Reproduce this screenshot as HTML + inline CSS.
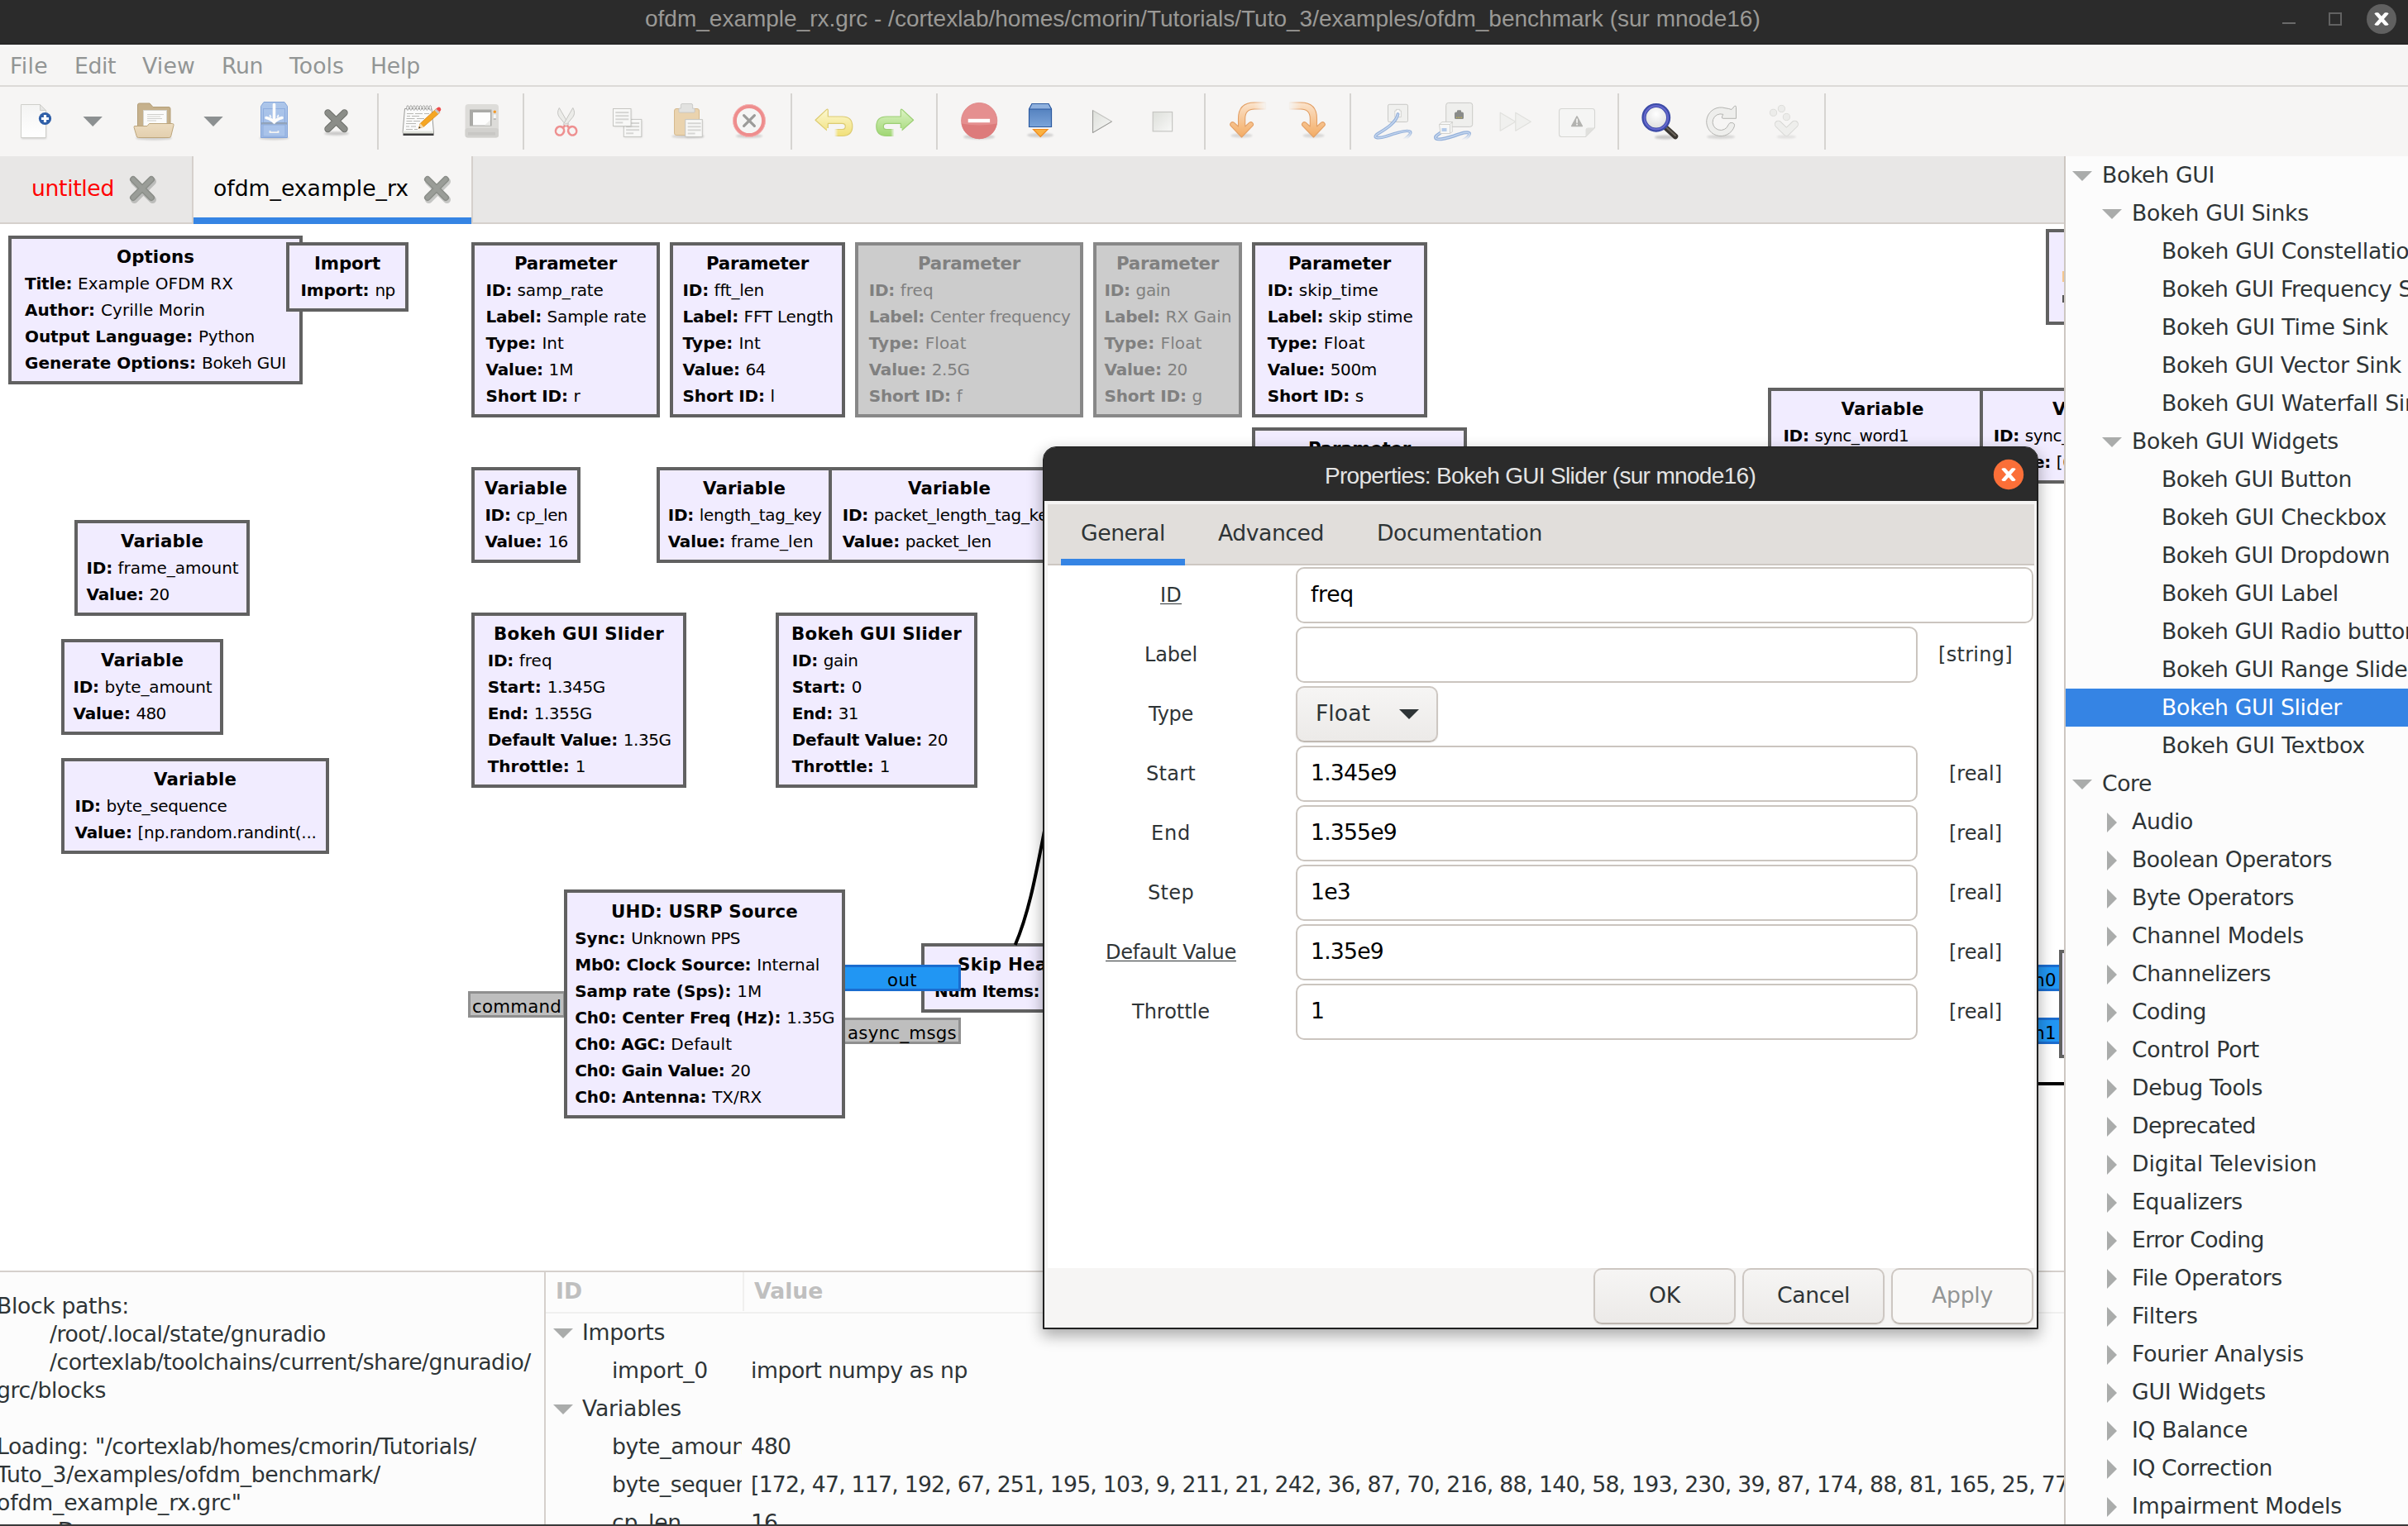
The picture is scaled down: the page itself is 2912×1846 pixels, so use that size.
<!DOCTYPE html>
<html><head><meta charset="utf-8"><title>ofdm_example_rx.grc</title>
<style>
*{box-sizing:border-box}
html,body{margin:0;padding:0}
body{width:2912px;height:1846px;overflow:hidden;position:relative;background:#f6f5f4;font-family:"DejaVu Sans","Liberation Sans",sans-serif;font-size:26.667px;font-kerning:normal;color:#2e3436}
.abs{position:absolute}
#titlebar{left:0;top:0;width:2912px;height:54px;background:#2b2b2b;box-shadow:inset 0 -1px #1c1c1c}
#title{left:780px;top:0;height:54px;line-height:46px;font-family:"Liberation Sans",sans-serif;font-size:28px;color:#9a9996;white-space:nowrap}
#menubar{left:0;top:54px;width:2912px;height:51px;background:#f6f5f4;border-top:2px solid #fdfdfd;border-bottom:2px solid #dcdad7}
.mi{position:absolute;top:-1px;height:49px;line-height:49px;color:#929595;white-space:nowrap}
#toolbar{left:0;top:105px;width:2912px;height:84px;background:#f6f5f4}
.sep{position:absolute;top:8px;width:2px;height:68px;background:#d6d4d1}
#tabbar{left:0;top:189px;width:2496px;height:82px;background:#e8e7e6;border-bottom:2px solid #d5d0cc}
#canvas{left:0;top:271px;width:2496px;height:1267px;background:#fff;overflow:hidden}
.blk{position:absolute;border:4px solid #616161;background:#f1ecff;color:#000;font-size:20px;line-height:32px;white-space:nowrap;padding:6px 0 0 16px;overflow:hidden}
.blk .t{font-weight:bold;font-size:21.333px;text-align:center;margin-left:-16px}
.blk.dis{background:#cccccc;border-color:#888888;color:#808080}
.port{position:absolute;font-size:21.333px;color:#000;white-space:nowrap;text-align:center;line-height:28px}
#right{left:2496px;top:189px;width:416px;height:1657px;background:#fcfcfc;border-left:2px solid #cdc7c2;overflow:hidden}
.tr{position:absolute;left:0;width:420px;height:46px;line-height:46px;white-space:nowrap;color:#2e3436}
.tr.sel{background:#3584e4;color:#fff}
.ad{position:absolute;width:0;height:0;margin-left:-0.5px;border-left:12px solid transparent;border-right:12px solid transparent;border-top:12px solid #aaacab}
.ar{position:absolute;width:0;height:0;margin-left:-1px;border-top:12px solid transparent;border-bottom:12px solid transparent;border-left:12px solid #aaacab}
#console{left:0;top:1539px;width:658px;height:307px;background:#fcfcfc;overflow:hidden;color:#2e3436;line-height:34px;white-space:pre}
#vars{left:660px;top:1539px;width:1836px;height:307px;background:#fcfcfc;overflow:hidden}
.vr{position:absolute;height:46px;line-height:45px;white-space:nowrap;overflow:hidden}
#dlg{left:1261px;top:540px;width:1204px;height:1068px;background:#f6f5f4;border:1px solid #1f1f1f;border-radius:16px 16px 0 0;box-shadow:inset 1px 0 #222,inset -1px 0 #222,inset 0 -1px #222,0 7px 18px 1px rgba(0,0,0,.32);overflow:hidden}
#dtitle{left:0;top:0;width:1201px;height:65px;background:#2b2b2b;color:#e4e4e4;font-family:"Liberation Sans",sans-serif;font-size:28px;line-height:69px;text-align:center;letter-spacing:-0.67px}
.ent{position:absolute;height:68px;border:2px solid #cbc5bf;border-radius:10px;background:#fff;color:#000;line-height:62px;padding-left:16px;font-size:26.667px}
.lab{position:absolute;left:0;width:308px;text-align:center;line-height:69px;height:67px;color:#2e3436;font-size:24px}
.lab u{text-decoration-thickness:1.300px;text-underline-offset:1.500px}
.typ{position:absolute;left:1082px;width:90px;text-align:center;line-height:69px;height:67px;color:#2e3436;white-space:nowrap;font-size:24px}
.btn{position:absolute;top:993px;height:68px;width:172px;border:2px solid #cdc7c2;border-color:#cdc7c2 #cdc7c2 #bfb8b1;box-shadow:0 1px 2px rgba(0,0,0,.07);border-radius:10px;background:linear-gradient(#f6f5f4,#eceae8);text-align:center;line-height:61px;color:#2e3436}
</style></head>
<body>

<div id="titlebar" class="abs"></div>
<div id="title" class="abs">ofdm_example_rx.grc - /cortexlab/homes/cmorin/Tutorials/Tuto_3/examples/ofdm_benchmark (sur mnode16)</div>
<svg class="abs" style="left:2740px;top:0" width="172" height="54" viewBox="2740 0 172 54">
<rect x="2760" y="27" width="16" height="2" fill="#6a6a6a"/>
<rect x="2817" y="16" width="14" height="14" fill="none" stroke="#626262" stroke-width="2"/>
<circle cx="2880" cy="23" r="18" fill="#606060"/>
<clipPath id="cx1"><rect x="2868" y="15.200" width="24" height="15.600"/></clipPath><path d="M2873 15 L2887 31 M2887 15 L2873 31" stroke="#fff" stroke-width="4.400" clip-path="url(#cx1)"/>
</svg>
<div id="menubar" class="abs">
<div class="mi" style="left:12px"><span style="letter-spacing:0.344px">File</span></div>
<div class="mi" style="left:90px"><span style="letter-spacing:-0.410px">Edit</span></div>
<div class="mi" style="left:172px"><span style="letter-spacing:0.179px">View</span></div>
<div class="mi" style="left:268px"><span style="letter-spacing:-0.378px">Run</span></div>
<div class="mi" style="left:350px"><span style="letter-spacing:0.062px">Tools</span></div>
<div class="mi" style="left:448px"><span style="letter-spacing:-0.199px">Help</span></div>
</div>
<div id="toolbar" class="abs">
<div class="sep" style="left:456px"></div>
<div class="sep" style="left:632px"></div>
<div class="sep" style="left:956px"></div>
<div class="sep" style="left:1132px"></div>
<div class="sep" style="left:1456px"></div>
<div class="sep" style="left:1632px"></div>
<div class="sep" style="left:1956px"></div>
<div class="sep" style="left:2206px"></div>
<svg class="abs" style="left:0;top:0" width="2912" height="84" viewBox="0 105 2912 84">
<defs>
<linearGradient id="gpaper" x1="0" y1="0" x2="0" y2="1"><stop offset="0" stop-color="#f4f4f3"/><stop offset="1" stop-color="#ffffff"/></linearGradient>
<linearGradient id="gfold" x1="0" y1="0" x2="0" y2="1"><stop offset="0" stop-color="#ecdcc0"/><stop offset="1" stop-color="#e3cfae"/></linearGradient>
<linearGradient id="gcab" x1="0" y1="0" x2="0" y2="1"><stop offset="0" stop-color="#adc6ea"/><stop offset="1" stop-color="#9fbbe6"/></linearGradient>
<linearGradient id="gbox" x1="0" y1="0" x2="0" y2="1"><stop offset="0" stop-color="#4a78b8"/><stop offset="1" stop-color="#7ba4d9"/></linearGradient>
<linearGradient id="gor" x1="0" y1="0" x2="0" y2="1"><stop offset="0" stop-color="#fbe3cb"/><stop offset="1" stop-color="#f3ab62"/></linearGradient>
<linearGradient id="gorl" x1="0" y1="0" x2="1" y2="0"><stop offset="0" stop-color="#f6c99a"/><stop offset="1" stop-color="#f6c99a" stop-opacity="0"/></linearGradient>
<linearGradient id="gorr" x1="1" y1="0" x2="0" y2="0"><stop offset="0" stop-color="#f6c99a"/><stop offset="1" stop-color="#f6c99a" stop-opacity="0"/></linearGradient>
<linearGradient id="gyel" x1="0" y1="0" x2="0" y2="1"><stop offset="0" stop-color="#fcf8d2"/><stop offset="1" stop-color="#f1e078"/></linearGradient>
<linearGradient id="ggrn" x1="0" y1="0" x2="0" y2="1"><stop offset="0" stop-color="#dcf3c4"/><stop offset="1" stop-color="#9fd672"/></linearGradient>
<linearGradient id="ggray" x1="0" y1="0" x2="1" y2="1"><stop offset="0" stop-color="#dddfda"/><stop offset="1" stop-color="#f8f8f7"/></linearGradient>
<linearGradient id="gfade" x1="0" y1="0" x2="0" y2="1"><stop offset="0" stop-color="#f6f5f4" stop-opacity="0"/><stop offset=".7" stop-color="#f6f5f4" stop-opacity="1"/></linearGradient>
<radialGradient id="glens" cx=".5" cy=".35" r=".6"><stop offset="0" stop-color="#ffffff"/><stop offset="1" stop-color="#dedede"/></radialGradient>
<filter id="sh" x="-20%" y="-20%" width="140%" height="160%"><feGaussianBlur stdDeviation="1.2"/></filter>
</defs>
<path d="M26 128 H48.500 L56 135 V168 H26 Z" fill="#000" opacity=".16" filter="url(#sh)"/>
<path d="M25.5 126.5 H48.5 L55.5 133.5 V166.5 H25.5 Z" fill="url(#gpaper)" stroke="#cfcfcb" stroke-width="1"/>
<path d="M48.5 126.5 V133.5 H55.5 Z" fill="#e6e6e4" stroke="#cfcfcb" stroke-width="1"/>
<circle cx="54.5" cy="143.5" r="7.6" fill="#2f5fa8"/><path d="M50 143.5 H59 M54.5 139 V148" stroke="#fff" stroke-width="3.2"/>
<path d="M100.5 141 h23.4 l-11.7 12 z" fill="#8c9091"/>
<path d="M246.3 141 h23.4 l-11.7 12 z" fill="#8c9091"/>
<ellipse cx="186" cy="167" rx="22" ry="2.5" fill="#000" opacity=".15" filter="url(#sh)"/>
<path d="M166.5 127 q0 -2 2 -2 h12.5 l4 4.5 h19 q2 0 2 2 v30 h-39.5 z" fill="#c6b18c" stroke="#b39e78" stroke-width="1"/>
<rect x="173.5" y="133.5" width="28" height="22" fill="#fbfbfa" stroke="#d6d6d2" stroke-width="1"/>
<path d="M178 138.5 h20 M178 141 h16 M178 143.5 h18 M178 146 h11" stroke="#cfcfcc" stroke-width="1"/>
<path d="M162.5 152.5 h15.5 l2.5 -3 h28 q1.8 0 1.5 2 l-3.2 13 q-.4 2 -2.3 2 h-37 q-2 0 -2.4 -2 l-2.9 -10 q-.4 -2 0.3 -2 z" fill="url(#gfold)" stroke="#bda67d" stroke-width="1"/>
<ellipse cx="331.5" cy="167" rx="18" ry="2.2" fill="#000" opacity=".15" filter="url(#sh)"/>
<path d="M315.5 128.5 l3.5 -5 h25 l3.5 5 v38 h-32 z" fill="url(#gcab)" stroke="#84a4d8" stroke-width="1"/>
<rect x="318.5" y="131.5" width="26" height="17" fill="none" stroke="#8fadde" stroke-width="1"/>
<rect x="316" y="148" width="31" height="2.6" fill="#8d9aa8" opacity=".7"/>
<rect x="318" y="151" width="27" height="14" fill="#a9c3ea" stroke="#8fadde" stroke-width="1"/>
<path d="M326.5 158 v2.2 h10 v-2.2" fill="none" stroke="#f2f2f2" stroke-width="1.8"/>
<path d="M331.5 126.5 V147" stroke="#fcfcfc" stroke-width="3.600" stroke-linecap="round"/><path d="M322 142.500 q6.500 1.500 9.500 5.500 q3 -4 9.500 -5.500" fill="none" stroke="#fcfcfc" stroke-width="3.600" stroke-linecap="round" stroke-linejoin="round"/>
<path d="M327 139 q-1.5 2 1.2 2.6 M336 139 q1.5 2 -1.2 2.6" stroke="#fcfcfc" stroke-width="1.6" fill="none"/>
<ellipse cx="407" cy="161.5" rx="15" ry="2.2" fill="#000" opacity=".18" filter="url(#sh)"/>
<path d="M396.5 136.5 L416.5 156 M416.5 136.5 L396.5 156" stroke="#6e706b" stroke-width="8.4" stroke-linecap="round"/>
<path d="M396.5 136.5 L416.5 156 M416.5 136.5 L396.5 156" stroke="#8b8d88" stroke-width="6.4" stroke-linecap="round"/>
<rect x="487.5" y="160" width="37" height="4" fill="#3c3c3c"/>
<path d="M489.5 131.5 h32.5 l2.5 29 h-37.5 z" fill="#fafafa" stroke="#9b9b98" stroke-width="1"/>
<rect x="487.5" y="158.5" width="36.5" height="3" fill="#e4e6df"/>
<path d="M492 137.5 h8 M502 137.5 h9 M513 137.5 h6 M492 140.5 h4 M498 140.5 h9 M491.5 143.5 h10 M504 143.5 h9 M491.5 146.5 h7 M500 146.5 h8 M491 149.5 h12 M491 153 h4 M497 153 h6 M491 156.5 h8 M501 156.5 h4" stroke="#b8b8b4" stroke-width="1.1"/>
<ellipse cx="493.0" cy="130.5" rx="1.3" ry="2.8" fill="#fff" stroke="#8a8a88" stroke-width=".8"/>
<ellipse cx="496.9" cy="130.5" rx="1.3" ry="2.8" fill="#fff" stroke="#8a8a88" stroke-width=".8"/>
<ellipse cx="500.8" cy="130.5" rx="1.3" ry="2.8" fill="#fff" stroke="#8a8a88" stroke-width=".8"/>
<ellipse cx="504.7" cy="130.5" rx="1.3" ry="2.8" fill="#fff" stroke="#8a8a88" stroke-width=".8"/>
<ellipse cx="508.6" cy="130.5" rx="1.3" ry="2.8" fill="#fff" stroke="#8a8a88" stroke-width=".8"/>
<ellipse cx="512.5" cy="130.5" rx="1.3" ry="2.8" fill="#fff" stroke="#8a8a88" stroke-width=".8"/>
<ellipse cx="516.4" cy="130.5" rx="1.3" ry="2.8" fill="#fff" stroke="#8a8a88" stroke-width=".8"/>
<ellipse cx="520.3" cy="130.5" rx="1.3" ry="2.8" fill="#fff" stroke="#8a8a88" stroke-width=".8"/>
<path d="M506.3 155.3 l2 -6 l19 -17.5 l4.5 4.5 l-19.5 17 z" fill="#f5a623" stroke="#d8861a" stroke-width=".8"/>
<path d="M527.3 131.8 l2 -1.8 q2 -1 3.3 0.6 q1.4 1.6 .2 3.4 l-1.2 1.2 z" fill="#ee4b4b"/>
<path d="M525.5 133.6 l1.8 -1.8 l4.5 4.5 l-1.8 1.6 z" fill="#c9c9c9"/>
<path d="M506.3 155.3 l2 -6 l4 4.5 z" fill="#f3dcb4"/><path d="M506.3 155.3 l.8 -2.4 l1.6 1.7 z" fill="#222"/>
<rect x="562.5" y="126" width="40.5" height="40.5" rx="4" fill="#dddcd9"/>
<rect x="562.5" y="155" width="40.5" height="11.5" rx="3" fill="#d2d1ce"/><rect x="566" y="160" width="33" height="3.5" fill="#c8c7c4"/>
<rect x="568" y="132.5" width="26.5" height="20" fill="#a9a9a6"/><rect x="572" y="136" width="21" height="15.5" fill="#fdfdfd"/>
<path d="M593 145 v6.5 h-7 z" fill="#ececea"/>
<circle cx="598.3" cy="135.3" r="1.7" fill="#f39a2b"/><rect x="596.8" y="138.5" width="3" height="4.5" fill="#f6f6f5"/><rect x="596.8" y="143.6" width="3" height=".9" fill="#9a9a98"/>
<path d="M676.3 130.5 q-3.5 6 0 11 l9.5 11.5 l2 -2.5 z" fill="#ecece9" stroke="#b9b9b5" stroke-width=".8"/>
<path d="M692.8 130.5 q3.5 6 0 11 l-9.5 11.5 l-2 -2.5 z" fill="#ecece9" stroke="#b9b9b5" stroke-width=".8"/>
<ellipse cx="677" cy="158.3" rx="5" ry="5.3" fill="none" stroke="#ee9090" stroke-width="2.6" transform="rotate(25 677 158.3)"/>
<ellipse cx="692.2" cy="158.3" rx="5" ry="5.3" fill="none" stroke="#ee9090" stroke-width="2.6" transform="rotate(-25 692.2 158.3)"/>
<path d="M680.5 154.5 L684.5 151 L688.5 154.5" fill="none" stroke="#ee9090" stroke-width="2.8"/>
<circle cx="684.5" cy="150.7" r="1.3" fill="#f6f6f5" stroke="#c0c0bd" stroke-width=".6"/>
<rect x="755.0" y="145.4" width="21.5" height="21" fill="#000" opacity=".12" filter="url(#sh)"/>
<rect x="754.3" y="144.4" width="21.5" height="21" fill="#f8f8f7" stroke="#c6c6c2" stroke-width="1"/>
<rect x="757.0999999999999" y="148.0" width="16" height="2" fill="#d6d6d4"/>
<rect x="757.0999999999999" y="152.1" width="16" height="2" fill="#d6d6d4"/>
<rect x="757.0999999999999" y="156.2" width="16" height="2" fill="#d6d6d4"/>
<rect x="757.0999999999999" y="160.3" width="9" height="2" fill="#d6d6d4"/>
<rect x="742.2" y="132.5" width="21.5" height="21" fill="#000" opacity=".12" filter="url(#sh)"/>
<rect x="741.5" y="131.5" width="21.5" height="21" fill="#f8f8f7" stroke="#c6c6c2" stroke-width="1"/>
<rect x="744.3" y="135.1" width="16" height="2" fill="#d6d6d4"/>
<rect x="744.3" y="139.2" width="16" height="2" fill="#d6d6d4"/>
<rect x="744.3" y="143.29999999999998" width="16" height="2" fill="#d6d6d4"/>
<rect x="744.3" y="147.4" width="9" height="2" fill="#d6d6d4"/>
<ellipse cx="832" cy="165" rx="20" ry="2.2" fill="#000" opacity=".15" filter="url(#sh)"/>
<rect x="815.5" y="131.5" width="30" height="32" rx="2.5" fill="#ead3ae" stroke="#d6ba8f" stroke-width="1"/>
<path d="M825 125.5 h11 q1.6 0 1.6 1.6 v4 h1.5 q1 0 1 1 v3 q0 1 -1 1 h-17.2 q-1 0 -1 -1 v-3 q0 -1 1 -1 h1.5 v-4 q0 -1.6 1.6 -1.6 z" fill="#e2e2e0" stroke="#c4c4c1" stroke-width=".8"/>
<rect x="829.5" y="145.6" width="20.5" height="20.8" fill="#000" opacity=".12" filter="url(#sh)"/>
<rect x="828.8" y="144.6" width="20.5" height="20.8" fill="#f8f8f7" stroke="#c6c6c2" stroke-width="1"/>
<rect x="831.5999999999999" y="148.2" width="16" height="2" fill="#d6d6d4"/>
<rect x="831.5999999999999" y="152.29999999999998" width="16" height="2" fill="#d6d6d4"/>
<rect x="831.5999999999999" y="156.39999999999998" width="16" height="2" fill="#d6d6d4"/>
<rect x="831.5999999999999" y="160.5" width="9" height="2" fill="#d6d6d4"/>
<ellipse cx="906" cy="164.5" rx="16" ry="2.5" fill="#000" opacity=".15" filter="url(#sh)"/>
<circle cx="906" cy="146" r="17.4" fill="#f5f5f4" stroke="#ee8d8d" stroke-width="4.6"/>
<circle cx="906" cy="146" r="19.5" fill="none" stroke="#f5b5b5" stroke-width=".9"/>
<path d="M899.600 139.600 L912.400 152.400 M912.400 139.600 L899.600 152.400" stroke="#9b9b99" stroke-width="3.200" stroke-linecap="round"/>
<defs><linearGradient id="fy" x1="0" x2="1"><stop offset="0" stop-color="#fff" stop-opacity="0"/><stop offset=".45" stop-color="#fff"/></linearGradient><mask id="my"><rect x="980" y="120" width="60" height="60" fill="#fff"/><rect x="1000" y="155" width="14" height="14" fill="#000"/><rect x="1009" y="155" width="10" height="14" fill="url(#fy)"/></mask>
<linearGradient id="fg" x1="1" x2="0"><stop offset="0" stop-color="#fff" stop-opacity="0"/><stop offset=".45" stop-color="#fff"/></linearGradient><mask id="mg"><rect x="1050" y="120" width="60" height="60" fill="#fff"/><rect x="1076" y="155" width="14" height="14" fill="#000"/><rect x="1071" y="155" width="10" height="14" fill="url(#fg)"/></mask></defs>
<g mask="url(#my)"><path d="M986 145.3 L999.5 132.6 q1.8 -1.4 1.8 1 V141 h17 q12.5 0 12.5 11.8 q0 11.7 -12.5 11.7 h-9 v-8 h9 q4 0 4 -3.6 q0 -3.5 -4 -3.5 h-17 v7 q0 2.4 -1.8 1 z" fill="url(#gyel)" stroke="#dccb72" stroke-width="1.2" stroke-linejoin="round"/></g>
<g transform="translate(2090.6,0) scale(-1,1)"><g mask="url(#my)"><path d="M986 145.3 L999.5 132.6 q1.8 -1.4 1.8 1 V141 h17 q12.5 0 12.5 11.8 q0 11.7 -12.5 11.7 h-9 v-8 h9 q4 0 4 -3.6 q0 -3.5 -4 -3.5 h-17 v7 q0 2.4 -1.8 1 z" fill="url(#ggrn)" stroke="#9ccf74" stroke-width="1.2" stroke-linejoin="round"/></g></g>
<ellipse cx="1184" cy="165.5" rx="19" ry="3" fill="#000" opacity=".15" filter="url(#sh)"/>
<circle cx="1184.2" cy="146" r="21.6" fill="#e58f8f" stroke="#dd8080" stroke-width=".8"/>
<path d="M1162.8 149.5 q21 4 42.8 0 a21.6 21.6 0 0 1 -42.8 0 z" fill="#dd7b7b"/>
<rect x="1170.7" y="143.8" width="26.4" height="4.4" fill="#fff"/>
<ellipse cx="1258" cy="163.5" rx="16" ry="2.8" fill="#000" opacity=".15" filter="url(#sh)"/>
<path d="M1244.5 132 l3.5 -6.5 h20 l3.5 6.5 v21.5 h-27 z" fill="url(#gbox)" stroke="#2c5aa0" stroke-width="1.2"/>
<path d="M1244.5 132 l3.5 -6.5 h20 l3.5 6.5 z" fill="#8fb1de" stroke="#2c5aa0" stroke-width="1"/>
<path d="M1249.5 156.5 h17.5 l-8.8 9 z" fill="#fbb13f" stroke="#f08a1c" stroke-width="1.2"/>
<path d="M1321.5 133.5 V160.5 L1344.5 147 Z" fill="url(#ggray)" stroke="#c4c4c1" stroke-width="1.2" stroke-linejoin="round"/>
<path d="M1321.5 133.5 V160.5 L1344.5 147" fill="none" stroke="#6f6f6d" stroke-width=".9" opacity=".55"/>
<rect x="1394.2" y="135.5" width="23.4" height="23.3" fill="url(#ggray)" stroke="#c6c6c3" stroke-width="1.2"/>
<defs><linearGradient id="fo" x1="0" x2="1"><stop offset="0" stop-color="#fff"/><stop offset="1" stop-color="#fff" stop-opacity="0"/></linearGradient><mask id="mo"><rect x="1480" y="118" width="36" height="56" fill="#fff"/><rect x="1516" y="118" width="16" height="56" fill="url(#fo)"/></mask></defs>
<ellipse cx="1501.5" cy="164" rx="13" ry="2.5" fill="#000" opacity=".12" filter="url(#sh)"/>
<g mask="url(#mo)"><path d="M1531 124 h-14 q-19.5 0 -19.5 19.5 v9.5 l-5 -4.6 q-2.2 -1.6 -4 .2 q-1.8 1.9 0 3.8 l13 13.6 l13.2 -13.6 q1.8 -1.9 0 -3.8 q-1.8 -1.8 -4 -.2 l-5 4.6 v-9.5 q0 -11.500 11.3 -11.500 h14 z" fill="url(#gor)" stroke="#e3a066" stroke-width="1.1" stroke-linejoin="round"/></g>
<ellipse cx="1588.5" cy="164" rx="13" ry="2.5" fill="#000" opacity=".12" filter="url(#sh)"/>
<g transform="translate(3090,0) scale(-1,1)"><g mask="url(#mo)"><path d="M1531 124 h-14 q-19.5 0 -19.5 19.5 v9.5 l-5 -4.6 q-2.2 -1.6 -4 .2 q-1.8 1.9 0 3.8 l13 13.6 l13.2 -13.6 q1.8 -1.9 0 -3.8 q-1.8 -1.8 -4 -.2 l-5 4.6 v-9.5 q0 -11.500 11.3 -11.500 h14 z" fill="url(#gor)" stroke="#e3a066" stroke-width="1.1" stroke-linejoin="round"/></g></g>
<rect x="1678.5" y="126.3" width="24" height="21.2" rx="1.8" fill="#f0f0ee" stroke="#c9c9c6" stroke-width="1"/>
<path d="M1686.8 134 h1.6 v-1.6 h4.400 v1.6 h1.6 v7.6 h-7.600 z" fill="#f8f8f7" stroke="#cfcfcc" stroke-width=".9"/>
<path d="M1690.5 138 C1688 150 1672 158 1664.500 163 C1660 167.500 1668 167.500 1676 165 C1690 160 1703 156.500 1705.500 159.500 C1707 162 1702 166 1698 169" fill="none" stroke="#95b1da" stroke-width="3.8" stroke-linecap="round"/>
<path d="M1690.5 138 C1688 150 1672 158 1664.500 163 C1660 167.500 1668 167.500 1676 165 C1690 160 1703 156.500 1705.500 159.500 C1707 162 1702 166 1698 169" fill="none" stroke="#c3d5ee" stroke-width="1.5" stroke-linecap="round"/>
<path d="M1700 160 L1712 160 L1704 172 L1690 172 Z" fill="url(#gfade)"/>
<rect x="1748.7" y="124.4" width="32" height="29" rx="3" fill="#efefed" stroke="#c9c9c6" stroke-width="1"/>
<path d="M1759 137.500 q0 -2 2 -2 h1 v-1.3 q0 -1 1 -1 h3 q1 0 1 1 v1.3 h1 q2 0 2 2 v5 q0 1.500 -1.500 1.500 h-8 q-1.500 0 -1.500 -1.500 z" fill="#8a8c8a"/>
<path d="M1761.5 141.500 v1.600 M1763.500 141.500 v1.600 M1765.500 141.500 v1.600 M1767.500 141.500 v1.600" stroke="#c9b94a" stroke-width=".9"/>
<path d="M1746 157 C1742 162 1734 164 1736.500 167.500 C1739 170 1750 167 1758 164.500 C1768 161 1776 158.500 1777 161.500 C1777.500 164 1773 167.500 1769 170" fill="none" stroke="#95b1da" stroke-width="4" stroke-linecap="round"/>
<path d="M1746 157 C1742 162 1734 164 1736.500 167.500 C1739 170 1750 167 1758 164.500 C1768 161 1776 158.500 1777 161.500 C1777.500 164 1773 167.500 1769 170" fill="none" stroke="#c3d5ee" stroke-width="1.6" stroke-linecap="round"/>
<path d="M1771 161 L1783 161 L1775 173 L1761 173 Z" fill="url(#gfade)"/>
<path d="M1740.500 150.500 l3.500 -3 h12.500 l-.5 3 l.3 9 l-2.800 2 h-11.5 z" fill="#f7f7f6" stroke="#cdcdca" stroke-width=".9" stroke-linejoin="round"/>
<path d="M1740.500 150.500 h13 l3 -3" fill="none" stroke="#cdcdca" stroke-width=".9"/><path d="M1753.5 150.500 v10.500" stroke="#cdcdca" stroke-width=".9"/>
<rect x="1743.500" y="155" width="6" height="4" fill="#b4cbea"/>
<path d="M1814.2 136.2 V158.2 L1832.7 147.200 Z" fill="#f0f0ee" stroke="#e0e0dd" stroke-width="1.2" stroke-linejoin="round"/>
<path d="M1832.8 136.2 V158.2 L1851.3 147.200 Z" fill="#f0f0ee" stroke="#e0e0dd" stroke-width="1.2" stroke-linejoin="round"/>
<path d="M1888.5 131.500 h37 q3 0 3 3 v20 l-11 11 h-29 q-3 0 -3 -3 v-28 q0 -3 3 -3 z" fill="#f5f5f4" stroke="#d6d6d3" stroke-width="1.1"/>
<path d="M1928.500 154.500 h-8 q-3 0 -3 3 v8 z" fill="#e0e0dd"/>
<path d="M1907 140.800 l6.400 11.800 h-12.800 z" fill="#b3b3b0" stroke="#b3b3b0" stroke-width="1.4" stroke-linejoin="round"/>
<rect x="1906.2" y="143.500" width="1.700" height="5.200" fill="#f5f5f4"/><rect x="1906.2" y="149.800" width="1.700" height="1.700" fill="#f5f5f4"/>
<ellipse cx="2014" cy="166" rx="13" ry="2.500" fill="#000" opacity=".18" filter="url(#sh)"/>
<path d="M2014.500 154.500 L2026 165" stroke="#3a3630" stroke-width="6.5" stroke-linecap="round"/>
<path d="M2015 154 L2026 164" stroke="#6b655c" stroke-width="2" stroke-linecap="round"/>
<circle cx="2002.800" cy="142.300" r="14.800" fill="url(#glens)" stroke="#3b4aa6" stroke-width="5.2"/>
<circle cx="2002.800" cy="142.300" r="14.200" fill="none" stroke="#6f6fd6" stroke-width="2.200" opacity=".8"/>
<ellipse cx="2081" cy="165.500" rx="17" ry="2.500" fill="#000" opacity=".12" filter="url(#sh)"/>
<path d="M2086 130.700 A17.300 17.300 0 1 0 2097.400 152.800 q.8 -3.400 -2.600 -4.300 q-3.400 -.8 -4.600 2.300 A9.800 9.800 0 1 1 2083.800 138.300 L2082.500 141 q-1 2.300 1.500 2.300 H2099.500 V129.600 q0 -2.200 -2 -1.200 L2094 132.500 Q2090.500 131.300 2086 130.700 z" fill="#eeeeec" stroke="#b4b4b1" stroke-width="1"/>
<circle cx="2144.5" cy="136.3" r="4.100" fill="#ececea" stroke="#d9d9d6" stroke-width=".9"/>
<circle cx="2154.4" cy="131.5" r="4.100" fill="#ececea" stroke="#d9d9d6" stroke-width=".9"/>
<circle cx="2160.4" cy="141.5" r="4.100" fill="#ececea" stroke="#d9d9d6" stroke-width=".9"/>
<ellipse cx="2160.400" cy="165.500" rx="12" ry="2" fill="#000" opacity=".08" filter="url(#sh)"/>
<path d="M2150.500 150.300 L2160.400 160 L2170.300 150.300" fill="none" stroke="#d4d4d1" stroke-width="9.200" stroke-linecap="round" stroke-linejoin="round"/>
<path d="M2150.500 150.300 L2160.400 160 L2170.300 150.300" fill="none" stroke="#eeeeec" stroke-width="7.400" stroke-linecap="round" stroke-linejoin="round"/>
</svg>
</div>
<div id="tabbar" class="abs">
<div class="abs" style="left:232px;top:0;width:340px;height:80px;background:#f6f5f4;border-left:2px solid #d5d0cc;border-right:2px solid #d5d0cc"></div>
<div class="abs" style="left:234px;top:74px;width:336px;height:8px;background:#3584e4"></div>
<div class="abs" style="left:38px;top:1px;line-height:76px;color:#ff0000;font-size:26.667px"><span style="letter-spacing:-0.358px">untitled</span></div>
<div class="abs" style="left:258px;top:1px;line-height:76px;color:#000;font-size:26.667px"><span style="letter-spacing:-0.006px">ofdm_example_rx</span></div>
<svg class="abs" style="left:152px;top:18px" width="44" height="44" viewBox="0 0 44 44"><path d="M9 10 L31 32 M31 10 L9 32" stroke="#6d706c" stroke-width="9" stroke-linecap="round" opacity=".35" transform="translate(1.5,2.5)"/><path d="M9 10 L31 32 M31 10 L9 32" stroke="#8b8e89" stroke-width="8" stroke-linecap="round"/><path d="M9 10 L31 32 M31 10 L9 32" stroke="#9a9d98" stroke-width="5" stroke-linecap="round"/></svg>
<svg class="abs" style="left:508px;top:18px" width="44" height="44" viewBox="0 0 44 44"><path d="M9 10 L31 32 M31 10 L9 32" stroke="#6d706c" stroke-width="9" stroke-linecap="round" opacity=".35" transform="translate(1.5,2.5)"/><path d="M9 10 L31 32 M31 10 L9 32" stroke="#8b8e89" stroke-width="8" stroke-linecap="round"/><path d="M9 10 L31 32 M31 10 L9 32" stroke="#9a9d98" stroke-width="5" stroke-linecap="round"/></svg>
</div>
<div id="canvas" class="abs">
<div class="blk " style="left:10px;top:14px;width:356px;height:180px;padding-left:16px;"><div class="t" style="margin-left:-16px"><span style="letter-spacing:0.078px">Options</span></div><div><b><span style="letter-spacing:-0.206px">Title: </span></b><span style="letter-spacing:0.068px">Example OFDM RX</span></div><div><b><span style="letter-spacing:-0.010px">Author: </span></b><span style="letter-spacing:0.054px">Cyrille Morin</span></div><div><b><span style="letter-spacing:-0.074px">Output Language: </span></b><span style="letter-spacing:-0.221px">Python</span></div><div><b><span style="letter-spacing:0.011px">Generate Options: </span></b><span style="letter-spacing:-0.244px">Bokeh GUI</span></div></div>
<div class="blk " style="left:346px;top:22px;width:148px;height:84px;padding-left:13.4px;"><div class="t" style="margin-left:-13.4px"><span style="letter-spacing:-0.135px">Import</span></div><div><b><span style="letter-spacing:-0.090px">Import: </span></b><span style="letter-spacing:-0.686px">np</span></div></div>
<div class="blk " style="left:570px;top:22px;width:228px;height:212px;padding-left:13.6px;"><div class="t" style="margin-left:-13.6px"><span style="letter-spacing:-0.251px">Parameter</span></div><div><b><span style="letter-spacing:-0.251px">ID: </span></b><span style="letter-spacing:-0.164px">samp_rate</span></div><div><b><span style="letter-spacing:-0.277px">Label: </span></b><span style="letter-spacing:-0.179px">Sample rate</span></div><div><b><span style="letter-spacing:0.142px">Type: </span></b><span style="letter-spacing:-0.139px">Int</span></div><div><b><span style="letter-spacing:-0.214px">Value: </span></b><span style="letter-spacing:0.010px">1M</span></div><div><b><span style="letter-spacing:-0.177px">Short ID: </span></b><span style="letter-spacing:-0.223px">r</span></div></div>
<div class="blk " style="left:810px;top:22px;width:212px;height:212px;padding-left:11.6px;"><div class="t" style="margin-left:-11.6px"><span style="letter-spacing:-0.251px">Parameter</span></div><div><b><span style="letter-spacing:-0.251px">ID: </span></b><span style="letter-spacing:-0.258px">fft_len</span></div><div><b><span style="letter-spacing:-0.277px">Label: </span></b><span style="letter-spacing:-0.221px">FFT Length</span></div><div><b><span style="letter-spacing:0.142px">Type: </span></b><span style="letter-spacing:-0.139px">Int</span></div><div><b><span style="letter-spacing:-0.214px">Value: </span></b><span style="letter-spacing:-0.725px">64</span></div><div><b><span style="letter-spacing:-0.177px">Short ID: </span></b><span style="letter-spacing:0.443px">l</span></div></div>
<div class="blk dis" style="left:1034px;top:22px;width:276px;height:212px;padding-left:12.7px;"><div class="t" style="margin-left:-12.7px"><span style="letter-spacing:-0.251px">Parameter</span></div><div><b><span style="letter-spacing:-0.251px">ID: </span></b><span style="letter-spacing:0.044px">freq</span></div><div><b><span style="letter-spacing:-0.277px">Label: </span></b><span style="letter-spacing:-0.249px">Center frequency</span></div><div><b><span style="letter-spacing:0.142px">Type: </span></b><span style="letter-spacing:0.121px">Float</span></div><div><b><span style="letter-spacing:-0.214px">Value: </span></b><span style="letter-spacing:-0.326px">2.5G</span></div><div><b><span style="letter-spacing:-0.177px">Short ID: </span></b><span style="letter-spacing:0.959px">f</span></div></div>
<div class="blk dis" style="left:1322px;top:22px;width:180px;height:212px;padding-left:9.5px;"><div class="t" style="margin-left:-9.5px"><span style="letter-spacing:-0.251px">Parameter</span></div><div><b><span style="letter-spacing:-0.251px">ID: </span></b><span style="letter-spacing:-0.296px">gain</span></div><div><b><span style="letter-spacing:-0.277px">Label: </span></b><span style="letter-spacing:0.008px">RX Gain</span></div><div><b><span style="letter-spacing:0.142px">Type: </span></b><span style="letter-spacing:0.121px">Float</span></div><div><b><span style="letter-spacing:-0.214px">Value: </span></b><span style="letter-spacing:-0.725px">20</span></div><div><b><span style="letter-spacing:-0.177px">Short ID: </span></b><span style="letter-spacing:-0.695px">g</span></div></div>
<div class="blk " style="left:1514px;top:22px;width:212px;height:212px;padding-left:14.8px;"><div class="t" style="margin-left:-14.8px"><span style="letter-spacing:-0.251px">Parameter</span></div><div><b><span style="letter-spacing:-0.251px">ID: </span></b><span style="letter-spacing:0.062px">skip_time</span></div><div><b><span style="letter-spacing:-0.277px">Label: </span></b><span style="letter-spacing:-0.022px">skip stime</span></div><div><b><span style="letter-spacing:0.142px">Type: </span></b><span style="letter-spacing:0.121px">Float</span></div><div><b><span style="letter-spacing:-0.214px">Value: </span></b><span style="letter-spacing:-0.414px">500m</span></div><div><b><span style="letter-spacing:-0.177px">Short ID: </span></b><span style="letter-spacing:-0.420px">s</span></div></div>
<div class="blk " style="left:1514px;top:246px;width:260px;height:212px;padding-left:14.8px;"><div class="t" style="margin-left:-14.8px"><span style="letter-spacing:-0.251px">Parameter</span></div><div><b><span style="letter-spacing:-0.251px">ID: </span></b><span style="letter-spacing:0.017px">frame_len</span></div><div><b><span style="letter-spacing:-0.277px">Label: </span></b><span style="letter-spacing:-0.202px">Frame length</span></div><div><b><span style="letter-spacing:0.142px">Type: </span></b><span style="letter-spacing:-0.139px">Int</span></div><div><b><span style="letter-spacing:-0.214px">Value: </span></b><span style="letter-spacing:-0.725px">1</span></div><div><b><span style="letter-spacing:-0.177px">Short ID: </span></b><span style="letter-spacing:0.000px"></span></div></div>
<div class="blk " style="left:570px;top:294px;width:132px;height:116px;padding-left:12.4px;"><div class="t" style="margin-left:-12.4px"><span style="letter-spacing:0.123px">Variable</span></div><div><b><span style="letter-spacing:-0.251px">ID: </span></b><span style="letter-spacing:-0.371px">cp_len</span></div><div><b><span style="letter-spacing:-0.214px">Value: </span></b><span style="letter-spacing:-0.725px">16</span></div></div>
<div class="blk " style="left:794px;top:294px;width:212px;height:116px;padding-left:9.7px;"><div class="t" style="margin-left:-9.7px"><span style="letter-spacing:0.123px">Variable</span></div><div><b><span style="letter-spacing:-0.251px">ID: </span></b><span style="letter-spacing:-0.254px">length_tag_key</span></div><div><b><span style="letter-spacing:-0.214px">Value: </span></b><span style="letter-spacing:0.017px">frame_len</span></div></div>
<div class="blk " style="left:1002px;top:294px;width:292px;height:116px;padding-left:12.7px;"><div class="t" style="margin-left:-12.7px"><span style="letter-spacing:0.123px">Variable</span></div><div><b><span style="letter-spacing:-0.251px">ID: </span></b><span style="letter-spacing:-0.310px">packet_length_tag_key</span></div><div><b><span style="letter-spacing:-0.214px">Value: </span></b><span style="letter-spacing:-0.350px">packet_len</span></div></div>
<div class="blk " style="left:90px;top:358px;width:212px;height:116px;padding-left:10.6px;"><div class="t" style="margin-left:-10.6px"><span style="letter-spacing:0.123px">Variable</span></div><div><b><span style="letter-spacing:-0.251px">ID: </span></b><span style="letter-spacing:-0.040px">frame_amount</span></div><div><b><span style="letter-spacing:-0.214px">Value: </span></b><span style="letter-spacing:-0.725px">20</span></div></div>
<div class="blk " style="left:74px;top:502px;width:196px;height:116px;padding-left:10.5px;"><div class="t" style="margin-left:-10.5px"><span style="letter-spacing:0.123px">Variable</span></div><div><b><span style="letter-spacing:-0.251px">ID: </span></b><span style="letter-spacing:-0.168px">byte_amount</span></div><div><b><span style="letter-spacing:-0.214px">Value: </span></b><span style="letter-spacing:-0.725px">480</span></div></div>
<div class="blk " style="left:74px;top:646px;width:324px;height:116px;padding-left:12.5px;"><div class="t" style="margin-left:-12.5px"><span style="letter-spacing:0.123px">Variable</span></div><div><b><span style="letter-spacing:-0.251px">ID: </span></b><span style="letter-spacing:-0.389px">byte_sequence</span></div><div><b><span style="letter-spacing:-0.214px">Value: </span></b><span style="letter-spacing:-0.284px">[np.random.randint(...</span></div></div>
<div class="blk " style="left:570px;top:470px;width:260px;height:212px;padding-left:15.7px;"><div class="t" style="margin-left:-15.7px"><span style="letter-spacing:0.246px">Bokeh GUI Slider</span></div><div><b><span style="letter-spacing:-0.251px">ID: </span></b><span style="letter-spacing:0.044px">freq</span></div><div><b><span style="letter-spacing:0.022px">Start: </span></b><span style="letter-spacing:-0.459px">1.345G</span></div><div><b><span style="letter-spacing:-0.236px">End: </span></b><span style="letter-spacing:-0.459px">1.355G</span></div><div><b><span style="letter-spacing:-0.232px">Default Value: </span></b><span style="letter-spacing:-0.406px">1.35G</span></div><div><b><span style="letter-spacing:0.001px">Throttle: </span></b><span style="letter-spacing:-0.725px">1</span></div></div>
<div class="blk " style="left:938px;top:470px;width:244px;height:212px;padding-left:15.7px;"><div class="t" style="margin-left:-15.7px"><span style="letter-spacing:0.246px">Bokeh GUI Slider</span></div><div><b><span style="letter-spacing:-0.251px">ID: </span></b><span style="letter-spacing:-0.296px">gain</span></div><div><b><span style="letter-spacing:0.022px">Start: </span></b><span style="letter-spacing:-0.725px">0</span></div><div><b><span style="letter-spacing:-0.236px">End: </span></b><span style="letter-spacing:-0.725px">31</span></div><div><b><span style="letter-spacing:-0.232px">Default Value: </span></b><span style="letter-spacing:-0.725px">20</span></div><div><b><span style="letter-spacing:0.001px">Throttle: </span></b><span style="letter-spacing:-0.725px">1</span></div></div>
<div class="blk " style="left:2138px;top:198px;width:277px;height:116px;padding-left:14.4px;"><div class="t" style="margin-left:-14.4px"><span style="letter-spacing:0.123px">Variable</span></div><div><b><span style="letter-spacing:-0.251px">ID: </span></b><span style="letter-spacing:-0.381px">sync_word1</span></div><div><b><span style="letter-spacing:-0.214px">Value: </span></b><span style="letter-spacing:-0.411px">[0., 0., 0., 0., 0., ...</span></div></div>
<div class="blk " style="left:2394px;top:198px;width:276px;height:116px;padding-left:12.8px;"><div class="t" style="margin-left:-12.8px"><span style="letter-spacing:0.123px">Variable</span></div><div><b><span style="letter-spacing:-0.251px">ID: </span></b><span style="letter-spacing:-0.381px">sync_word2</span></div><div><b><span style="letter-spacing:-0.214px">Value: </span></b><span style="letter-spacing:-0.244px">[0j, 0j, 0j, 0j, 0j, ...</span></div></div>
<div class="blk " style="left:2474px;top:6px;width:200px;height:116px;padding-left:16px;"><div class="t" style="margin-left:-16px"><span style="letter-spacing:0.000px"></span></div></div>
<div class="abs" style="left:2494px;top:57px;width:3px;height:13px;background:#f5c78e"></div><div class="abs" style="left:2494px;top:86px;width:3px;height:9px;background:#555"></div>
<div class="blk " style="left:1114px;top:870px;width:212px;height:84px;padding-left:12px;"><div class="t" style="margin-left:-12px"><span style="letter-spacing:0.272px">Skip Head</span></div><div><b><span style="letter-spacing:-0.277px">Num Items: </span></b><span style="letter-spacing:-0.439px">500k</span></div></div>
<svg class="abs" style="left:1200px;top:689px" width="100" height="200" viewBox="1200 960 100 200"><path d="M1227.700 1143 C1246 1100 1254 1050 1266 990" stroke="#000" stroke-width="4" fill="none"/></svg>
<div class="port" style="left:566px;top:928px;width:118px;height:32px;background:#bebebe;border:3.5px solid #8f8f8f;line-height:32px"><span style="letter-spacing:0.217px">command</span></div>
<div class="port" style="left:1019px;top:896px;width:143px;height:32px;background:#2196f3;border:3.5px solid #1a6ccf;line-height:32px;padding-left:1px"><span style="letter-spacing:0.354px">out</span></div>
<div class="port" style="left:1019px;top:960px;width:143px;height:32px;background:#bebebe;border:3.5px solid #8f8f8f;line-height:32px;padding-left:1px"><span style="letter-spacing:0.272px">async_msgs</span></div>
<div class="blk " style="left:682px;top:805px;width:340px;height:277px;padding-left:9.2px;padding-top:7px;"><div class="t" style="margin-left:-9.2px"><span style="letter-spacing:0.134px">UHD: USRP Source</span></div><div><b><span style="letter-spacing:-0.083px">Sync: </span></b><span style="letter-spacing:-0.365px">Unknown PPS</span></div><div><b><span style="letter-spacing:-0.164px">Mb0: Clock Source: </span></b><span style="letter-spacing:-0.135px">Internal</span></div><div><b><span style="letter-spacing:-0.078px">Samp rate (Sps): </span></b><span style="letter-spacing:0.010px">1M</span></div><div><b><span style="letter-spacing:-0.128px">Ch0: Center Freq (Hz): </span></b><span style="letter-spacing:-0.406px">1.35G</span></div><div><b><span style="letter-spacing:-0.333px">Ch0: AGC: </span></b><span style="letter-spacing:0.132px">Default</span></div><div><b><span style="letter-spacing:-0.310px">Ch0: Gain Value: </span></b><span style="letter-spacing:-0.725px">20</span></div><div><b><span style="letter-spacing:-0.112px">Ch0: Antenna: </span></b><span style="letter-spacing:-0.051px">TX/RX</span></div></div>
<div class="port" style="left:2400px;top:896px;width:90px;height:32px;background:#2196f3;border:3.5px solid #1a6ccf;border-right:none;line-height:32px;text-align:right;padding-right:3px"><span style="letter-spacing:0.327px">in0</span></div>
<div class="port" style="left:2400px;top:960px;width:90px;height:32px;background:#2196f3;border:3.5px solid #1a6ccf;border-right:none;line-height:32px;text-align:right;padding-right:3px"><span style="letter-spacing:0.327px">in1</span></div>
<div class="abs" style="left:2490px;top:878px;width:30px;height:131px;border:4px solid #616161;background:#f1ecff"></div>
<div class="abs" style="left:2440px;top:1038px;width:56px;height:4px;background:#000"></div>
</div>
<div id="right" class="abs">
<div class="tr" style="top:0px;padding-left:44px"><span style="letter-spacing:-0.326px">Bokeh GUI</span></div>
<div class="ad" style="left:8.5px;top:18px"></div>
<div class="tr" style="top:46px;padding-left:80px"><span style="letter-spacing:-0.266px">Bokeh GUI Sinks</span></div>
<div class="ad" style="left:44.5px;top:64px"></div>
<div class="tr" style="top:92px;padding-left:116px"><span style="letter-spacing:-0.264px">Bokeh GUI Constellation Sink</span></div>
<div class="tr" style="top:138px;padding-left:116px"><span style="letter-spacing:-0.347px">Bokeh GUI Frequency Sink</span></div>
<div class="tr" style="top:184px;padding-left:116px"><span style="letter-spacing:-0.202px">Bokeh GUI Time Sink</span></div>
<div class="tr" style="top:230px;padding-left:116px"><span style="letter-spacing:-0.359px">Bokeh GUI Vector Sink</span></div>
<div class="tr" style="top:276px;padding-left:116px"><span style="letter-spacing:-0.248px">Bokeh GUI Waterfall Sink</span></div>
<div class="tr" style="top:322px;padding-left:80px"><span style="letter-spacing:-0.307px">Bokeh GUI Widgets</span></div>
<div class="ad" style="left:44.5px;top:340px"></div>
<div class="tr" style="top:368px;padding-left:116px"><span style="letter-spacing:-0.421px">Bokeh GUI Button</span></div>
<div class="tr" style="top:414px;padding-left:116px"><span style="letter-spacing:-0.314px">Bokeh GUI Checkbox</span></div>
<div class="tr" style="top:460px;padding-left:116px"><span style="letter-spacing:-0.418px">Bokeh GUI Dropdown</span></div>
<div class="tr" style="top:506px;padding-left:116px"><span style="letter-spacing:-0.357px">Bokeh GUI Label</span></div>
<div class="tr" style="top:552px;padding-left:116px"><span style="letter-spacing:-0.377px">Bokeh GUI Radio buttons</span></div>
<div class="tr" style="top:598px;padding-left:116px"><span style="letter-spacing:-0.384px">Bokeh GUI Range Slider</span></div>
<div class="tr sel" style="top:644px;padding-left:116px"><span style="letter-spacing:-0.341px">Bokeh GUI Slider</span></div>
<div class="tr" style="top:690px;padding-left:116px"><span style="letter-spacing:-0.209px">Bokeh GUI Textbox</span></div>
<div class="tr" style="top:736px;padding-left:44px"><span style="letter-spacing:-0.430px">Core</span></div>
<div class="ad" style="left:8.5px;top:754px"></div>
<div class="tr" style="top:782px;padding-left:80px"><span style="letter-spacing:-0.359px">Audio</span></div>
<div class="ar" style="left:50.5px;top:794px"></div>
<div class="tr" style="top:828px;padding-left:80px"><span style="letter-spacing:-0.454px">Boolean Operators</span></div>
<div class="ar" style="left:50.5px;top:840px"></div>
<div class="tr" style="top:874px;padding-left:80px"><span style="letter-spacing:-0.477px">Byte Operators</span></div>
<div class="ar" style="left:50.5px;top:886px"></div>
<div class="tr" style="top:920px;padding-left:80px"><span style="letter-spacing:-0.280px">Channel Models</span></div>
<div class="ar" style="left:50.5px;top:932px"></div>
<div class="tr" style="top:966px;padding-left:80px"><span style="letter-spacing:-0.346px">Channelizers</span></div>
<div class="ar" style="left:50.5px;top:978px"></div>
<div class="tr" style="top:1012px;padding-left:80px"><span style="letter-spacing:-0.517px">Coding</span></div>
<div class="ar" style="left:50.5px;top:1024px"></div>
<div class="tr" style="top:1058px;padding-left:80px"><span style="letter-spacing:-0.311px">Control Port</span></div>
<div class="ar" style="left:50.5px;top:1070px"></div>
<div class="tr" style="top:1104px;padding-left:80px"><span style="letter-spacing:-0.351px">Debug Tools</span></div>
<div class="ar" style="left:50.5px;top:1116px"></div>
<div class="tr" style="top:1150px;padding-left:80px"><span style="letter-spacing:-0.544px">Deprecated</span></div>
<div class="ar" style="left:50.5px;top:1162px"></div>
<div class="tr" style="top:1196px;padding-left:80px"><span style="letter-spacing:-0.036px">Digital Television</span></div>
<div class="ar" style="left:50.5px;top:1208px"></div>
<div class="tr" style="top:1242px;padding-left:80px"><span style="letter-spacing:-0.310px">Equalizers</span></div>
<div class="ar" style="left:50.5px;top:1254px"></div>
<div class="tr" style="top:1288px;padding-left:80px"><span style="letter-spacing:-0.548px">Error Coding</span></div>
<div class="ar" style="left:50.5px;top:1300px"></div>
<div class="tr" style="top:1334px;padding-left:80px"><span style="letter-spacing:-0.311px">File Operators</span></div>
<div class="ar" style="left:50.5px;top:1346px"></div>
<div class="tr" style="top:1380px;padding-left:80px"><span style="letter-spacing:0.009px">Filters</span></div>
<div class="ar" style="left:50.5px;top:1392px"></div>
<div class="tr" style="top:1426px;padding-left:80px"><span style="letter-spacing:-0.231px">Fourier Analysis</span></div>
<div class="ar" style="left:50.5px;top:1438px"></div>
<div class="tr" style="top:1472px;padding-left:80px"><span style="letter-spacing:-0.211px">GUI Widgets</span></div>
<div class="ar" style="left:50.5px;top:1484px"></div>
<div class="tr" style="top:1518px;padding-left:80px"><span style="letter-spacing:-0.369px">IQ Balance</span></div>
<div class="ar" style="left:50.5px;top:1530px"></div>
<div class="tr" style="top:1564px;padding-left:80px"><span style="letter-spacing:-0.407px">IQ Correction</span></div>
<div class="ar" style="left:50.5px;top:1576px"></div>
<div class="tr" style="top:1610px;padding-left:80px"><span style="letter-spacing:-0.188px">Impairment Models</span></div>
<div class="ar" style="left:50.5px;top:1622px"></div>
<div class="tr" style="top:1656px;padding-left:80px"><span style="letter-spacing:-0.410px">Instrumentation</span></div>
<div class="ar" style="left:50.5px;top:1668px"></div>
</div>
<div class="abs" style="left:0;top:1537px;width:2496px;height:2px;background:#d5d0cc"></div>
<div class="abs" style="left:658px;top:1539px;width:2px;height:307px;background:#d5d0cc"></div>
<div id="console" class="abs" style="tab-size:64px"><div style="margin-top:-10px;margin-left:-4px">
<span style="letter-spacing:-0.342px">Block paths:</span>
	<span style="letter-spacing:-0.454px">/root/.local/state/gnuradio</span>
	<span style="letter-spacing:-0.491px">/cortexlab/toolchains/current/share/gnuradio/</span>
<span style="letter-spacing:-0.360px">grc/blocks</span>

<span style="letter-spacing:-0.416px">Loading: &quot;/cortexlab/homes/cmorin/Tutorials/</span>
<span style="letter-spacing:-0.332px">Tuto_3/examples/ofdm_benchmark/</span>
<span style="letter-spacing:-0.140px">ofdm_example_rx.grc&quot;</span>
<span style="letter-spacing:-0.458px">&gt;&gt;&gt; Done</span></div></div>
<div id="vars" class="abs">
<div class="abs" style="left:0;top:0;width:1836px;height:50px;border-bottom:2px solid #f0f0ef"></div>
<div class="abs" style="left:238px;top:0;width:2px;height:47px;background:#f0efee"></div>
<div class="vr" style="left:12px;top:0px;font-weight:bold;color:#bfbfbf">ID</div>
<div class="vr" style="left:252px;top:0px;font-weight:bold;color:#bfbfbf">Value</div>
<div class="vr" style="left:44px;top:50px;width:193px"><span style="letter-spacing:-0.342px">Imports</span></div>
<div class="ad" style="left:9px;top:68px"></div>
<div class="vr" style="left:80px;top:96px;width:157px"><span style="letter-spacing:-0.293px">import_0</span></div>
<div class="vr" style="left:248px;top:96px;width:1590px"><span style="letter-spacing:-0.446px">import numpy as np</span></div>
<div class="vr" style="left:44px;top:142px;width:193px"><span style="letter-spacing:-0.207px">Variables</span></div>
<div class="ad" style="left:9px;top:160px"></div>
<div class="vr" style="left:80px;top:188px;width:157px"><span style="letter-spacing:-0.345px">byte_amount</span></div>
<div class="vr" style="left:248px;top:188px;width:1590px"><span style="letter-spacing:-0.966px">480</span></div>
<div class="vr" style="left:80px;top:234px;width:157px"><span style="letter-spacing:-0.416px">byte_sequence</span></div>
<div class="vr" style="left:248px;top:234px;width:1590px"><span style="letter-spacing:-0.749px">[172, 47, 117, 192, 67, 251, 195, 103, 9, 211, 21, 242, 36, 87, 70, 216, 88, 140, 58, 193, 230, 39, 87, 174, 88, 81, 165, 25, 77, 12, 240, 114</span></div>
<div class="vr" style="left:80px;top:280px;width:157px"><span style="letter-spacing:-0.273px">cp_len</span></div>
<div class="vr" style="left:248px;top:280px;width:1590px"><span style="letter-spacing:-0.966px">16</span></div>
</div>
<div class="abs" style="left:0;top:1844px;width:2912px;height:2px;background:#3a3a3a"></div>
<div id="dlg" class="abs">
<div id="dtitle" class="abs">Properties: Bokeh GUI Slider (sur mnode16)</div>
<svg class="abs" style="left:1145px;top:11px" width="44" height="44" viewBox="0 0 44 44"><circle cx="22" cy="22" r="18.200" fill="#fb6f38"/><clipPath id="cx2"><rect x="10" y="14.200" width="24" height="15.800"/></clipPath><path d="M15 14 L29 30 M29 14 L15 30" stroke="#fff" stroke-width="4.400" clip-path="url(#cx2)"/></svg>
<div class="abs" style="left:5px;top:69px;width:1193px;height:74px;background:#e1dedb;border-bottom:2px solid #cdc7c2"></div>
<div class="abs" style="left:5px;top:143px;width:1193px;height:850px;background:#fff"></div>
<div class="abs" style="left:21px;top:135px;width:150px;height:8px;background:#3584e4"></div>
<div class="abs" style="left:45px;top:68px;line-height:72px;color:#2e3436"><span style="letter-spacing:-0.442px">General</span></div>
<div class="abs" style="left:211px;top:68px;line-height:72px;color:#2e3436"><span style="letter-spacing:-0.465px">Advanced</span></div>
<div class="abs" style="left:403px;top:68px;line-height:72px;color:#2e3436"><span style="letter-spacing:-0.429px">Documentation</span></div>
<div class="lab" style="top:145px"><u><span style="letter-spacing:0.221px">ID</span></u></div>
<div class="ent" style="left:305px;top:145px;width:892px"><span style="letter-spacing:-0.275px">freq</span></div>
<div class="lab" style="top:217px"><span style="letter-spacing:-0.149px">Label</span></div>
<div class="ent" style="left:305px;top:217px;width:752px"><span style="letter-spacing:0.000px"></span></div>
<div class="typ" style="top:217px"><span style="letter-spacing:0.297px">[string]</span></div>
<div class="lab" style="top:289px"><span style="letter-spacing:-0.281px">Type</span></div>
<div class="ent" style="left:305px;top:289px;width:172px;background:linear-gradient(#f6f5f4,#eceae8);border-color:#cdc7c2 #cdc7c2 #bfb8b1;box-shadow:0 1px 2px rgba(0,0,0,.07);color:#2e3436;padding-left:22px"><span style="letter-spacing:0.028px">Float</span></div>
<div class="abs" style="left:429.500px;top:317px;width:0;height:0;border-left:12px solid transparent;border-right:12px solid transparent;border-top:12px solid #2e3436"></div>
<div class="lab" style="top:361px"><span style="letter-spacing:0.274px">Start</span></div>
<div class="ent" style="left:305px;top:361px;width:752px"><span style="letter-spacing:-0.816px">1.345e9</span></div>
<div class="typ" style="top:361px"><span style="letter-spacing:-0.035px">[real]</span></div>
<div class="lab" style="top:433px"><span style="letter-spacing:0.797px">End</span></div>
<div class="ent" style="left:305px;top:433px;width:752px"><span style="letter-spacing:-0.816px">1.355e9</span></div>
<div class="typ" style="top:433px"><span style="letter-spacing:-0.035px">[real]</span></div>
<div class="lab" style="top:505px"><span style="letter-spacing:0.339px">Step</span></div>
<div class="ent" style="left:305px;top:505px;width:752px"><span style="letter-spacing:-0.780px">1e3</span></div>
<div class="typ" style="top:505px"><span style="letter-spacing:-0.035px">[real]</span></div>
<div class="lab" style="top:577px"><u><span style="letter-spacing:-0.248px">Default Value</span></u></div>
<div class="ent" style="left:305px;top:577px;width:752px"><span style="letter-spacing:-0.791px">1.35e9</span></div>
<div class="typ" style="top:577px"><span style="letter-spacing:-0.035px">[real]</span></div>
<div class="lab" style="top:649px"><span style="letter-spacing:-0.019px">Throttle</span></div>
<div class="ent" style="left:305px;top:649px;width:752px"><span style="letter-spacing:-0.966px">1</span></div>
<div class="typ" style="top:649px"><span style="letter-spacing:-0.035px">[real]</span></div>
<div class="btn" style="left:665px;"><span style="letter-spacing:-0.239px">OK</span></div>
<div class="btn" style="left:845px;"><span style="letter-spacing:-0.390px">Cancel</span></div>
<div class="btn" style="left:1025px;color:#929595;background:#f9f8f7;"><span style="letter-spacing:-0.257px">Apply</span></div>
</div>

</body></html>
